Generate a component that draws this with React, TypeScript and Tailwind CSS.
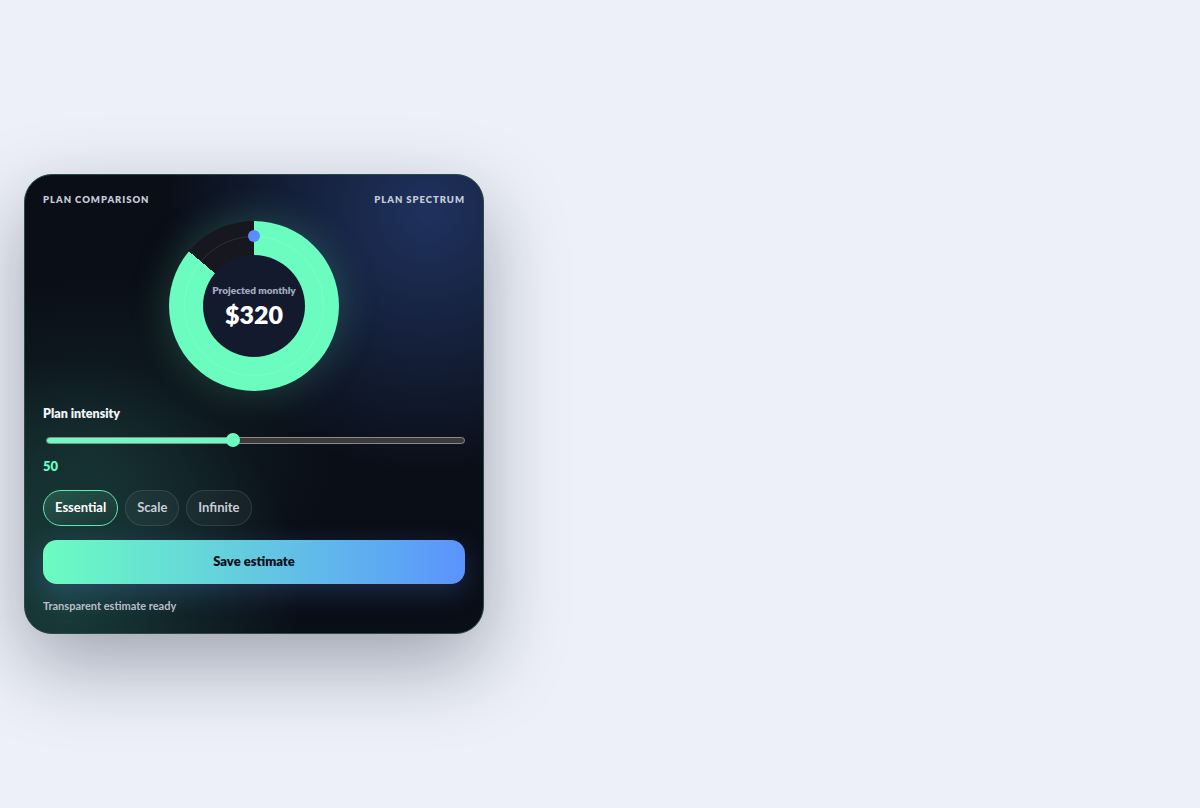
import React from "react";

const FONT = { fontFamily: 'Lato, "DejaVu Sans", sans-serif' };

const tiers = ["Essential", "Scale", "Infinite"];

function Donut() {
  return (
    <div className="relative mx-auto mt-[14px] h-[170px] w-[170px] rounded-full bg-[conic-gradient(#6bfdc0_0deg_310deg,#17171f_310deg_360deg)] shadow-[0_0_40px_rgba(107,253,192,0.22)]">
      <div className="absolute left-[15px] top-[15px] h-[140px] w-[140px] rounded-full border border-white/10" />
      <div className="absolute left-[79px] top-[9px] h-[12px] w-[12px] rounded-full bg-[#5b8cff]" />
      <div className="absolute left-[34px] top-[34px] flex h-[102px] w-[102px] flex-col items-center justify-center rounded-full bg-[#141a2e]">
        <span className="text-[10px] font-extrabold leading-none text-[#a3aac0]">Projected monthly</span>
        <span className="mt-[7px] text-[25px] font-extrabold leading-none text-white">$320</span>
      </div>
    </div>
  );
}

function Slider({ pct }: { pct: number }) {
  return (
    <div className="relative mt-[10px] flex h-[16px] items-center pl-[3px]">
      <div className="h-[7px] w-full overflow-hidden rounded-full border border-[#8a8a8a] bg-[#3b3b3b]">
        <div className="h-full bg-[#6bfdc0]" style={{ width: `${pct}%` }} />
      </div>
      <div
        className="absolute top-[1px] h-[14px] w-[14px] -translate-x-1/2 rounded-full bg-[#6bfdc0]"
        style={{ left: `calc(3px + ${pct}%)` }}
      />
    </div>
  );
}

export default function App() {
  return (
    <div className="flex min-h-screen items-center bg-[#edf0f8] p-6" style={FONT}>
      <div className="relative h-[460px] w-[460px] shrink-0 overflow-hidden rounded-[28px] border border-[#2a4a45] bg-[#0a0e17] bg-[radial-gradient(circle_at_88%_8%,rgba(38,62,118,0.75),transparent_45%),radial-gradient(circle_at_8%_92%,rgba(38,100,88,0.55),transparent_40%),radial-gradient(ellipse_at_15%_60%,rgba(30,70,65,0.35),transparent_45%)] p-[18px] shadow-[0_30px_80px_rgba(15,23,42,0.35)]">
        <div className="flex h-[14px] items-center justify-between pt-[1px] text-[9.5px] font-extrabold uppercase tracking-[0.1em] text-[#c4cad8]">
          <span>Plan comparison</span>
          <span>Plan spectrum</span>
        </div>

        <Donut />

        <div className="mt-[15px] text-[12.5px] font-extrabold leading-[16px] text-[#f1f4f8]">Plan intensity</div>
        <Slider pct={44.3} />
        <div className="mt-[10px] text-[13px] font-extrabold leading-[16px] text-[#6bfdc0]">50</div>

        <div className="mt-[16px] flex gap-[7px]">
          {tiers.map((t, i) => (
            <button
              key={t}
              className={
                i === 0
                  ? "h-[36px] rounded-full border border-[#62e8b4] bg-gradient-to-br from-[#25574a] to-[#1b3634] px-[11px] text-[13px] font-bold text-white"
                  : "h-[36px] rounded-full border border-white/10 bg-white/[0.04] px-[11px] text-[13px] font-bold text-[#c9cdd8]"
              }
            >
              {t}
            </button>
          ))}
        </div>

        <button className="mt-[14px] h-[44px] w-full rounded-[14px] bg-gradient-to-r from-[#6bfdc0] via-[#64c9e0] to-[#5b93fd] text-[13px] font-extrabold text-[#0a0f1a] shadow-[0_8px_28px_rgba(91,149,253,0.22)]">
          Save estimate
        </button>

        <div className="mt-[15px] text-[11px] font-bold leading-[14px] text-[#b9bfcb]">Transparent estimate ready</div>
      </div>
    </div>
  );
}
